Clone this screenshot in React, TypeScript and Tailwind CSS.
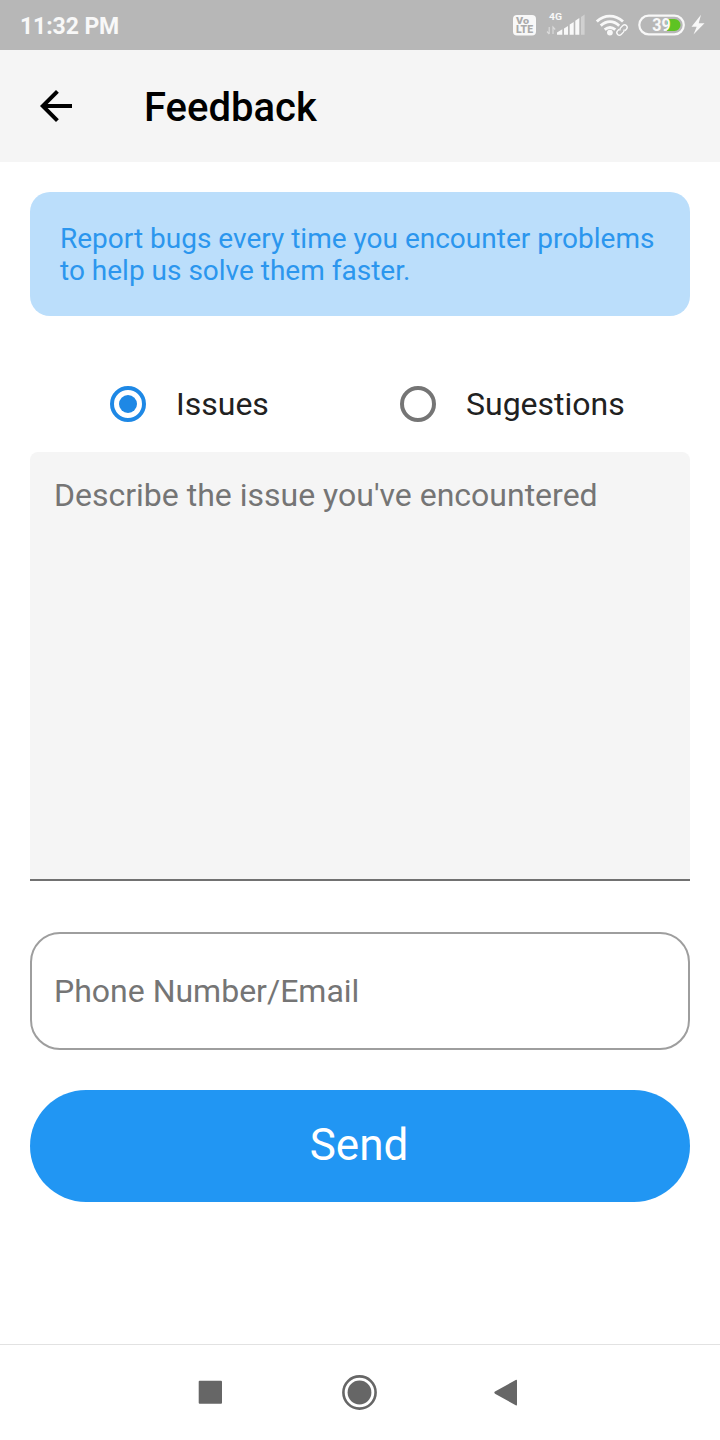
import { useState } from "react";

function StatusBar() {
  return (
    <div className="flex h-[50px] shrink-0 items-center justify-between bg-[#b7b7b7] pl-5 text-[#f8f8f8]">
      <span className="pt-[3px] text-[23px] leading-[28px] font-bold tracking-[-0.1px]">11:32 PM</span>
      <svg width="220" height="50" viewBox="500 0 220 50" fill="currentColor" fontFamily="Roboto, sans-serif">
        <rect x="513" y="15" width="23" height="20.5" rx="4" />
        <g fill="#aaaaaa" fontWeight="900">
          <text x="516" y="24.2" fontSize="9.5" textLength="13" lengthAdjust="spacingAndGlyphs">Vo</text>
          <text x="516" y="33" fontSize="10" textLength="17" lengthAdjust="spacingAndGlyphs">LTE</text>
        </g>
        <text x="549" y="20" fontSize="9.8" fontWeight="700" textLength="13" lengthAdjust="spacingAndGlyphs">4G</text>
        <g fill="none" stroke="#dadada" strokeWidth="1.2">
          <path d="M549.2 27v7M547 31.5l2.2 2.5M553 34v-7l2.2 2.5" />
        </g>
        <path d="M557 34.8v-2.3l5.3-3.2v5.5z" />
        <path d="M564 28.4l4-2.4v8.8h-4z" />
        <path d="M569.7 24.6l4-2.6v12.8h-4z" />
        <path d="M575.3 20.8l4-2.8v16.8h-4z" />
        <path d="M581 17l3.6-2.4v20.2H581z" fill="#d0d0d0" />
        <g fill="none" stroke="currentColor" strokeWidth="2.9">
          <path d="M596.8 21.5C604.5 14.3 615 14.3 623 21.5" />
          <path d="M600.7 25.7C606.5 20.5 613.5 20.5 619.2 25.7" />
          <path d="M604.7 29.6C608.2 26.7 611.8 26.7 615.3 29.6" />
        </g>
        <circle cx="609.9" cy="32.6" r="2.9" />
        <g transform="rotate(-45 622 30)" fill="none" stroke="currentColor" strokeWidth="1.4">
          <path d="M620.5 27.5h-2.2a2.5 2.5 0 0 0 0 5h3.2a2.5 2.5 0 0 0 2.2-1.5" />
          <path d="M623.5 32.5h2.2a2.5 2.5 0 0 0 0-5h-3.2a2.5 2.5 0 0 0-2.2 1.5" />
        </g>
        <rect x="639.3" y="15.6" width="44.5" height="18.8" rx="9.4" fill="none" stroke="currentColor" strokeWidth="2.2" />
        <path d="M667 19h7.5a6 6 0 0 1 0 12H667z" fill="#5ec323" />
        <text x="652.3" y="31.2" fontSize="18" fontWeight="700" textLength="18.4" lengthAdjust="spacingAndGlyphs">39</text>
        <path d="M701 14.8l-9.5 12h5.2l-3.2 7.8 11-11.3h-5.8z" />
      </svg>
    </div>
  );
}

function Header() {
  return (
    <header className="flex h-28 shrink-0 items-center gap-16 bg-[#f5f5f5] pl-8 text-black">
      <button type="button" aria-label="Back">
        <svg width="48" height="48" viewBox="0 0 24 24" fill="currentColor">
          <path d="M20 11H7.83l5.59-5.59L12 4l-8 8 8 8 1.41-1.41L7.83 13H20v-2z" />
        </svg>
      </button>
      <h1 className="pt-1 text-[40px] leading-[48px] font-medium">Feedback</h1>
    </header>
  );
}

interface RadioProps {
  label: string;
  checked: boolean;
  onSelect: () => void;
}

function Radio({ label, checked, onSelect }: RadioProps) {
  return (
    <button
      type="button"
      role="radio"
      aria-checked={checked}
      onClick={onSelect}
      className="flex w-[290px] items-center gap-[30px]"
    >
      <span
        className={
          checked
            ? "flex size-9 items-center justify-center rounded-full border-4 border-[#1e88e5]"
            : "flex size-9 items-center justify-center rounded-full border-4 border-[#757575]"
        }
      >
        {checked && <span className="size-[18px] rounded-full bg-[#1e88e5]" />}
      </span>
      <span className="text-[32px] leading-[38px] text-[#212121]">{label}</span>
    </button>
  );
}

function NavigationBar() {
  return (
    <nav className="flex h-24 shrink-0 justify-center border-t border-[#e2e2e2]">
      <svg width="360" height="95" viewBox="180 1345 360 95" fill="#666666">
        <rect x="198.7" y="1380.8" width="23.3" height="23" rx="1" />
        <circle cx="359.5" cy="1392.5" r="16.1" fill="none" stroke="#666666" strokeWidth="2.6" />
        <circle cx="359.5" cy="1392.5" r="11.9" />
        <path d="M495 1391.5 515.7 1380Q517 1379.4 517 1380.8V1404.2Q517 1406 515.7 1405.2L495 1393.7Q493.6 1392.6 495 1391.5Z" />
      </svg>
    </nav>
  );
}

export default function App() {
  const [kind, setKind] = useState("issue");

  return (
    <div className="flex h-[1440px] w-[720px] flex-col bg-white font-['Roboto',sans-serif]">
      <StatusBar />
      <Header />
      <main className="flex flex-1 flex-col px-[30px] pt-[30px]">
        <p className="h-[124px] rounded-[20px] bg-[#bbdefb] px-[30px] pt-[31px] text-[28px] leading-8 text-[#2b96ee]">
          Report bugs every time you encounter problems to help us solve them faster.
        </p>
        <div role="radiogroup" className="mt-10 flex h-24 items-center pl-20">
          <Radio label="Issues" checked={kind === "issue"} onSelect={() => setKind("issue")} />
          <Radio label="Sugestions" checked={kind === "suggestion"} onSelect={() => setKind("suggestion")} />
        </div>
        <textarea
          placeholder="Describe the issue you've encountered"
          className="block h-[429px] w-full resize-none rounded-t-lg border-b-2 border-[#717171] bg-[#f5f5f5] px-6 pt-6 text-[32px] leading-[38px] outline-none placeholder:text-[#757575]"
        />
        <input
          type="text"
          placeholder="Phone Number/Email"
          className="mt-[51px] h-[118px] w-full rounded-[30px] border-2 border-[#9e9e9e] px-[22px] text-[32px] leading-[38px] outline-none placeholder:text-[#757575]"
        />
        <button
          type="button"
          className="mt-10 h-28 w-full rounded-full bg-[#2196f3] pr-0.5 pb-0.5 text-[44px] leading-[52px] text-white"
        >
          Send
        </button>
      </main>
      <NavigationBar />
    </div>
  );
}
